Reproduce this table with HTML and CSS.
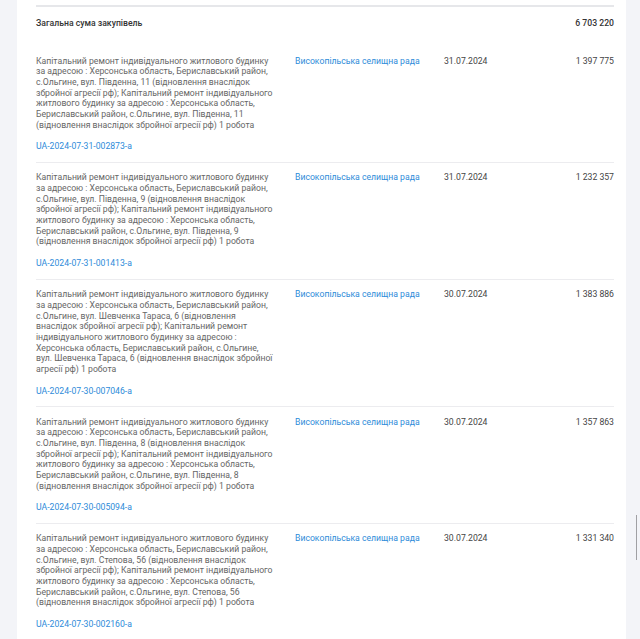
FILE: index.html
```html
<!DOCTYPE html>
<html lang="uk">
<head>
<meta charset="utf-8">
<title>Закупівлі</title>
<link rel="stylesheet" href="styles.css">
</head>
<body>
<div class="page">
  <div class="card">
    <div class="table">
      <div class="row head">
        <div class="c-desc total-label">Загальна сума закупівель</div>
        <div class="c-org"></div>
        <div class="c-date"></div>
        <div class="c-sum total-sum">6 703 220</div>
      </div>

      <div class="row">
        <div class="c-desc">
          <p class="desc">Капітальний ремонт індивідуального житлового будинку за адресою : Херсонська область, Бериславський район, с.Ольгине, вул. Південна, 11 (відновлення внаслідок збройної агресії рф); Капітальний ремонт індивідуального житлового будинку за адресою : Херсонська область, Бериславський район, с.Ольгине, вул. Південна, 11 (відновлення внаслідок збройної агресії рф) 1 робота</p>
          <a class="id" href="#">UA-2024-07-31-002873-a</a>
        </div>
        <div class="c-org"><a class="org" href="#">Високопільська селищна рада</a></div>
        <div class="c-date">31.07.2024</div>
        <div class="c-sum">1 397 775</div>
      </div>

      <div class="row">
        <div class="c-desc">
          <p class="desc">Капітальний ремонт індивідуального житлового будинку за адресою : Херсонська область, Бериславський район, с.Ольгине, вул. Південна, 9 (відновлення внаслідок збройної агресії рф); Капітальний ремонт індивідуального житлового будинку за адресою : Херсонська область, Бериславський район, с.Ольгине, вул. Південна, 9 (відновлення внаслідок збройної агресії рф) 1 робота</p>
          <a class="id" href="#">UA-2024-07-31-001413-a</a>
        </div>
        <div class="c-org"><a class="org" href="#">Високопільська селищна рада</a></div>
        <div class="c-date">31.07.2024</div>
        <div class="c-sum">1 232 357</div>
      </div>

      <div class="row">
        <div class="c-desc">
          <p class="desc">Капітальний ремонт індивідуального житлового будинку за адресою : Херсонська область, Бериславський район, с.Ольгине, вул. Шевченка Тараса, 6 (відновлення внаслідок збройної агресії рф); Капітальний ремонт індивідуального житлового будинку за адресою : Херсонська область, Бериславський район, с.Ольгине, вул. Шевченка Тараса, 6 (відновлення внаслідок збройної агресії рф) 1 робота</p>
          <a class="id" href="#">UA-2024-07-30-007046-a</a>
        </div>
        <div class="c-org"><a class="org" href="#">Високопільська селищна рада</a></div>
        <div class="c-date">30.07.2024</div>
        <div class="c-sum">1 383 886</div>
      </div>

      <div class="row">
        <div class="c-desc">
          <p class="desc">Капітальний ремонт індивідуального житлового будинку за адресою : Херсонська область, Бериславський район, с.Ольгине, вул. Південна, 8 (відновлення внаслідок збройної агресії рф); Капітальний ремонт індивідуального житлового будинку за адресою : Херсонська область, Бериславський район, с.Ольгине, вул. Південна, 8 (відновлення внаслідок збройної агресії рф) 1 робота</p>
          <a class="id" href="#">UA-2024-07-30-005094-a</a>
        </div>
        <div class="c-org"><a class="org" href="#">Високопільська селищна рада</a></div>
        <div class="c-date">30.07.2024</div>
        <div class="c-sum">1 357 863</div>
      </div>

      <div class="row">
        <div class="c-desc">
          <p class="desc">Капітальний ремонт індивідуального житлового будинку за адресою : Херсонська область, Бериславський район, с.Ольгине, вул. Степова, 56 (відновлення внаслідок збройної агресії рф); Капітальний ремонт індивідуального житлового будинку за адресою : Херсонська область, Бериславський район, с.Ольгине, вул. Степова, 56 (відновлення внаслідок збройної агресії рф) 1 робота</p>
          <a class="id" href="#">UA-2024-07-30-002160-a</a>
        </div>
        <div class="c-org"><a class="org" href="#">Високопільська селищна рада</a></div>
        <div class="c-date">30.07.2024</div>
        <div class="c-sum">1 331 340</div>
      </div>
    </div>
  </div>
  <div class="scroll-thumb"></div>
</div>
</body>
</html>
```

FILE: styles.css
```css
html, body {
  margin: 0;
  padding: 0;
}

body {
  background: #f3f4f8;
  font-family: Roboto, "Noto Sans", "DejaVu Sans", sans-serif;
  font-size: 8.667px;
  line-height: 10.667px;
  color: #333333;
  overflow: hidden;
}

.page {
  position: relative;
  height: 639px;
}

.card {
  margin-left: 17px;
  width: 609px;
  height: 639px;
  background: #ffffff;
  box-sizing: border-box;
  padding: 5px 12px 0 19px;
  overflow: hidden;
}

.table {
  border-top: 2px solid #e6e7ea;
}

.row {
  display: grid;
  grid-template-columns: 259px 149px 1fr auto;
  padding: 9.2px 0 10.2px 0;
  border-bottom: 1px solid #ececef;
}

.row.head {
  padding: 10.5px 0 18.3px 0;
  border-bottom: none;
}

.c-desc {
  padding-right: 20px;
}

.desc {
  margin: 0;
  color: #666666;
}

.id {
  display: block;
  margin-top: 11px;
  color: #2d8bd9;
  text-decoration: none;
}

.org {
  color: #2d8bd9;
  text-decoration: none;
}

.c-date {
  color: #444444;
}

.c-sum {
  text-align: right;
  color: #444444;
}

.total-label,
.total-sum {
  font-weight: 500;
  color: #333333;
}

.scroll-thumb {
  position: absolute;
  left: 636px;
  top: 515px;
  width: 1px;
  height: 45px;
  background: #a0a0a4;
}
```
